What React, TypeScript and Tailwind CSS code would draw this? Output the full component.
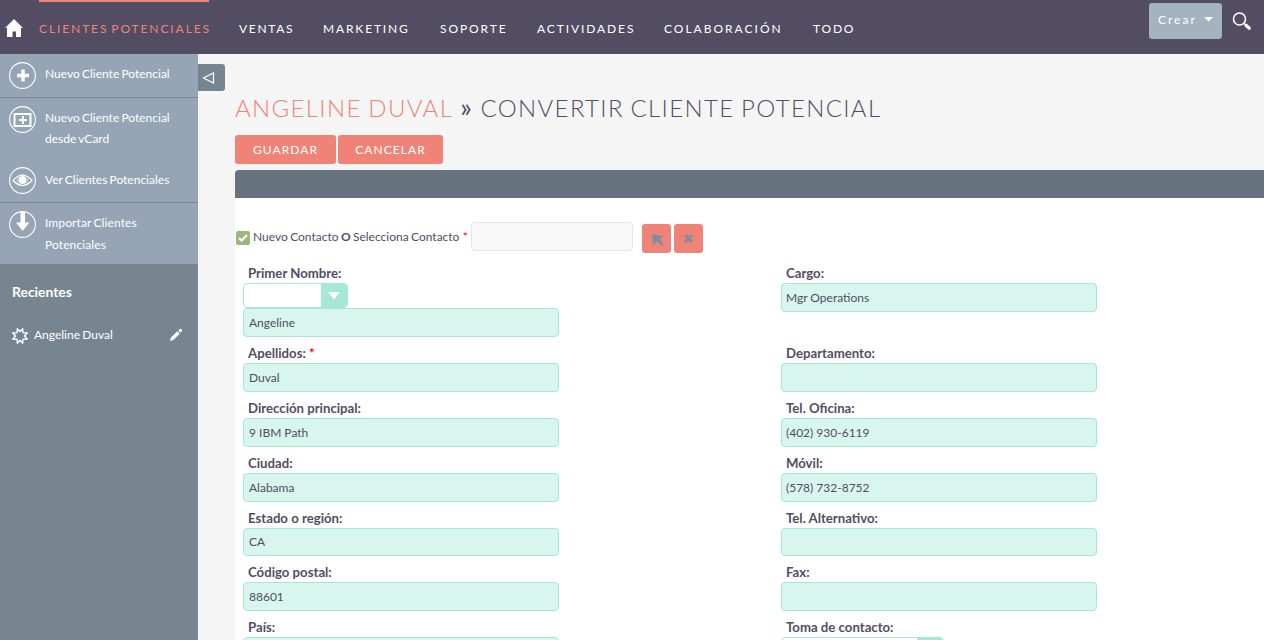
import React from "react";

const nav = [
  { label: "CLIENTES POTENCIALES", width: "w-[170px] tracking-[1.900px] [word-spacing:-2px]", active: true },
  { label: "VENTAS", width: "w-[54px] tracking-[1.700px]" },
  { label: "MARKETING", width: "w-[87px] tracking-[1.850px]" },
  { label: "SOPORTE", width: "w-[67px] tracking-[1.900px]" },
  { label: "ACTIVIDADES", width: "w-[97px] tracking-[1.900px]" },
  { label: "COLABORACIÓN", width: "w-[119px] tracking-[2px]" },
  { label: "TODO", width: "w-[45px] tracking-[1.800px]" },
];

function Circle({ children }: { children: React.ReactNode }) {
  return (
    <svg width="27" height="27" viewBox="0.5 0.5 27 27" fill="none" stroke="#fff" className="ml-px block shrink-0">
      <circle cx="14" cy="14" r="12.9" strokeWidth="1.1" />
      {children}
    </svg>
  );
}

function TopBar() {
  return (
    <header className="flex h-[54px] shrink-0 bg-[#534d64] text-white">
      <svg width="18" height="18" viewBox="0 0 18 18" fill="#fff" className="ml-[5px] mt-[19px] shrink-0">
        <path d="M9 0 18 9H16V18H11V12.5H7.500V18H2V9H0Z" />
      </svg>
      <nav className="ml-4 flex gap-[30px] text-[12px] leading-[18px]">
        {nav.map((n) => (
          <a
            key={n.label}
            className={`${n.width} h-[54px] whitespace-nowrap border-t-2 pt-[18px] ${
              n.active ? "border-[#f08377] text-[#f08377]" : "border-transparent"
            }`}
          >
            {n.label}
          </a>
        ))}
      </nav>
      <button className="ml-auto mt-[3px] flex h-9 w-[73px] items-center rounded-[3px] bg-[#a3b3bf] pl-[9px] text-[12px] tracking-[2px]">
        <span className="-mt-0.5 w-[46px] text-left">Crear</span>
        <svg width="9" height="5" viewBox="0 0 9 5" fill="#fff" className="-mt-1">
          <path d="M0 0H9L4.500 4.500Z" />
        </svg>
      </button>
      <svg width="20" height="20" viewBox="0 0 20 20" fill="none" stroke="#fff" className="ml-[10px] mr-3 mt-3 shrink-0">
        <circle cx="7.500" cy="7" r="6" strokeWidth="1.6" />
        <path d="M12 11.500 14 13.500" strokeWidth="1.5" />
        <path d="M14 13.300 17.300 16.200" strokeWidth="3.2" strokeLinecap="round" />
      </svg>
    </header>
  );
}

function Sidebar() {
  return (
    <aside className="w-[198px] shrink-0 bg-[#778591] text-[12px] text-white [word-spacing:-0.900px]">
      <div className="h-[210px] bg-[#95a5b5] leading-[21px]">
        <div className="flex h-[44px] gap-2 border-b border-[#778591] pl-2 pt-[8px]">
          <Circle><path d="M14.500 8V20M8.500 14H20.500" strokeWidth="3.4" /></Circle>
          <span className="pl-[1px] pt-[1px]">Nuevo Cliente Potencial</span>
        </div>
        <div className="flex h-[61px] gap-2 pl-2 pt-[8px]">
          <Circle>
            <path d="M6 8.500H22V20.500H6Z" strokeWidth="2" />
            <path d="M14.500 10.500V18.500M10.500 14.500H18.500" strokeWidth="2" />
          </Circle>
          <span className="pl-[1px] pt-[1px]">Nuevo Cliente Potencial<br />desde vCard</span>
        </div>
        <div className="flex h-[44px] gap-2 border-b border-[#778591] pl-2 pt-[8px]">
          <Circle>
            <path d="M4.500 14Q14 3.500 23.500 14Q14 24 4.500 14Z" strokeWidth="1.2" />
            <circle cx="14" cy="13.500" r="4" fill="#fff" stroke="none" />
            <circle cx="14" cy="13.500" r="5.500" strokeWidth=".5" />
          </Circle>
          <span className="pl-[1px] pt-[2px]">Ver Clientes Potenciales</span>
        </div>
        <div className="flex h-[61px] gap-2 pl-2 pt-[8px]">
          <Circle><path d="M12 1H16.500V12H21L14.200 20.500 7.500 12H12Z" fill="#fff" stroke="none" /></Circle>
          <span className="pl-[1px] pt-[1px] leading-[22px] tracking-[0.100px]">Importar Clientes<br />Potenciales</span>
        </div>
      </div>
      <h2 className="pl-3 pt-[19px] text-[13.900px] font-bold leading-[18px]">Recientes</h2>
      <div className="mt-[24px] flex h-5 items-center pl-3">
        <svg width="16" height="16" viewBox="0 0 16 16" fill="none" stroke="#fff" strokeWidth="1.4" className="mt-[2px]">
          <path d="M8 3.600 10.600 1 11 4.700 15 5 12.500 8 15 11 11 11.300 10.600 15 8 12.400 5.400 15 5 11.300 1 11 3.500 8 1 5 5 4.700 5.400 1Z" />
        </svg>
        <span className="ml-1.5 w-[135px]">Angeline Duval</span>
        <svg width="14" height="14" viewBox="0 0 14 14" fill="#fff">
          <path d="M1 13 2 9.500 8.300 3.300 10.700 5.700 4.300 12ZM9.200 2.500 10.800 1Q11.500.5 12.300 1.200L12.900 1.900Q13.400 2.500 12.800 3.200L11.400 4.800Z" />
        </svg>
      </div>
    </aside>
  );
}

function Label({ children }: { children: React.ReactNode }) {
  return <div className="h-5 pl-[5px] text-[13.200px] font-bold leading-5">{children}</div>;
}

function Field({ value = "", inset = "px-[5px]" }: { value?: string; inset?: string }) {
  return (
    <input
      readOnly
      value={value}
      className={`${inset} block h-[28.800px] w-[316px] rounded-[4px] border border-[#a5e8d6] bg-[#d8f5ee] text-[12px] outline-none`}
    />
  );
}

function Select({ wide = false }: { wide?: boolean }) {
  return (
    <div className={`${wide ? "w-[163px]" : "w-[105px]"} flex h-[25px] justify-end overflow-hidden rounded-[4px] border border-[#a5e8d6] bg-white`}>
      <div className="flex w-[26px] items-center justify-center bg-[#a5e8d6]">
        <svg width="12" height="8" viewBox="0 0 12 8" fill="#fff"><path d="M0 0H12L6 7.500Z" /></svg>
      </div>
    </div>
  );
}

const rows: [React.ReactNode, string, string, string][] = [
  [<>Apellidos: <span className="text-[#ff0000]">*</span></>, "Duval", "Departamento:", ""],
  ["Dirección principal:", "9 IBM Path", "Tel. Oficina:", "(402) 930-6119"],
  ["Ciudad:", "Alabama", "Móvil:", "(578) 732-8752"],
  ["Estado o región:", "CA", "Tel. Alternativo:", ""],
  ["Código postal:", "88601", "Fax:", ""],
];

export default function App() {
  return (
    <div className="flex h-[640px] w-[1264px] flex-col overflow-hidden bg-[#f5f5f5] font-['Lato',sans-serif] text-[#534d64]">
      <TopBar />
      <div className="flex min-h-0 flex-1">
        <Sidebar />
        <button className="mt-[10px] flex h-[27px] w-[27px] shrink-0 items-center rounded-r-[3px] bg-[#778591] pl-1">
          <svg width="14" height="12" viewBox="0 0 14 12" fill="none" stroke="#fff" strokeWidth="1.2"><path d="M11.500 1V11L1.500 6Z" /></svg>
        </button>
        <main className="ml-[10px] w-[1029px] shrink-0">
          <h1 className="h-[81px] whitespace-nowrap pt-[38px] text-[24px] font-light leading-[32px] tracking-[1.350px] [word-spacing:-1.200px]">
            <span className="text-[#f08377]">ANGELINE DUVAL</span>{" "}
            <span className="mx-px text-[27px] font-normal leading-none tracking-[1px]">»</span>{" "}
            <span>CONVERTIR CLIENTE POTENCIAL</span>
          </h1>
          <div className="flex gap-0.5 text-[12px] tracking-[1.050px] text-white">
            <button className="h-[29px] w-[101px] rounded-[3px] bg-[#f08377]">GUARDAR</button>
            <button className="h-[29px] w-[105px] rounded-[3px] bg-[#f08377]">CANCELAR</button>
          </div>
          <div className="mt-1.5 h-7 rounded-tl-[4px] bg-[#66727e]" />
          <section className="h-[450px] bg-white">
            <div className="flex h-[65px] items-start pl-[1px] pt-6 text-[12px]">
              <div className="mt-[9px] flex h-[14px] w-[14px] items-center justify-center rounded-[2px] bg-[#9ab87a]">
                <svg width="10" height="8" viewBox="0 0 10 8" fill="none" stroke="#fff" strokeWidth="2.200"><path d="M1 4 3.700 6.500 9 1" /></svg>
              </div>
              <span className="ml-[3px] mt-[6px] w-[218px] whitespace-nowrap leading-[18px] [word-spacing:-0.700px]">
                Nuevo Contacto <b>O</b> Selecciona Contacto <span className="ml-px text-[#ff0000]">*</span>
              </span>
              <input readOnly className="h-[29px] w-[162px] rounded-[4px] border border-[#e2e7eb] bg-[#f8f8f8]" />
              <button className="ml-[9px] mt-0.5 flex h-[29px] w-[29px] items-center justify-center rounded-[3px] bg-[#f08377]">
                <svg width="12" height="13" viewBox="0 0 12 13" fill="#778f9f" className="ml-[3px] mt-[3px]"><path d="M0 0 11.500 2.500 7.600 5 11.500 10.800 9.700 12 5.600 7.200 1 10.800Z" /></svg>
              </button>
              <button className="ml-[3px] mt-0.5 flex h-[29px] w-[29px] items-center justify-center rounded-[3px] bg-[#f08377]">
                <svg width="9" height="9" viewBox="0 0 9 9" stroke="#778f9f" strokeWidth="2.600" className="-mt-px"><path d="M1 1 8 8M8 1 1 8" /></svg>
              </button>
            </div>
            <div className="grid grid-cols-[538px_1fr] pl-2">
              <div className="h-[80.200px]">
                <Label>Primer Nombre:</Label>
                <Select />
                <Field value="Angeline" />
              </div>
              <div>
                <Label>Cargo:</Label>
                <Field value="Mgr Operations" inset="px-1" />
              </div>
              {rows.map(([l, v, r, w], i) => (
                <React.Fragment key={i}>
                  <div className="h-[54.800px]"><Label>{l}</Label><Field value={v} /></div>
                  <div className="h-[54.800px]"><Label>{r}</Label><Field value={w} inset="px-1" /></div>
                </React.Fragment>
              ))}
              <div><Label>País:</Label><Field /></div>
              <div><Label>Toma de contacto:</Label><Select wide /></div>
            </div>
          </section>
        </main>
      </div>
    </div>
  );
}
